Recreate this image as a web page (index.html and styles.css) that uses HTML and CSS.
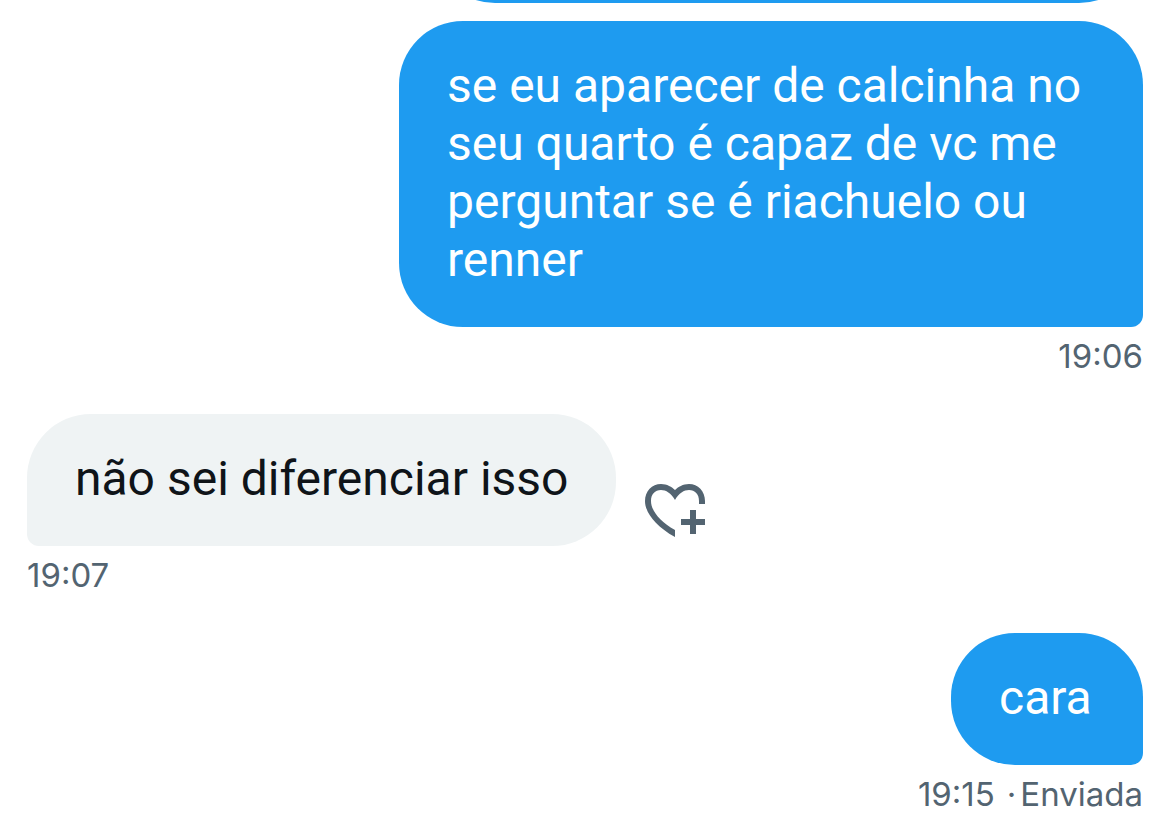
FILE: index.html
```html
<!DOCTYPE html>
<html lang="pt-BR">
<head>
<meta charset="utf-8">
<meta name="viewport" content="width=device-width, initial-scale=1">
<title>Mensagens</title>
<link rel="stylesheet" href="styles.css">
</head>
<body>
<main class="chat">
  <div class="previous"></div>
  <article class="message sent">
    <p class="bubble">se eu aparecer de calcinha no seu quarto é capaz de vc me perguntar se é riachuelo ou renner</p>
    <time class="meta">19:06</time>
  </article>
  <article class="message received">
    <div class="row">
      <p class="bubble">não sei diferenciar isso</p>
      <button class="react" type="button" aria-label="Reagir">
        <svg class="heart" viewBox="0 0 60 54" aria-hidden="true">
          <path d="M30 53C10 42 0 28 0 17C0 7 7 0 16 0C22 0 27 3 30 6C33 3 38 0 44 0C53 0 60 7 60 17V20H54V17C54 10 50 6 44 6C39 6 34 9 30 16C26 9 21 6 16 6C10 6 6 10 6 17C6 26 14 37 30 46Z"/>
          <path d="M45 26H51V35H60V41H51V50H45V41H36V35H45Z"/>
        </svg>
      </button>
    </div>
    <time class="meta">19:07</time>
  </article>
  <article class="message sent">
    <p class="bubble">cara</p>
    <div class="meta status"><time>19:15</time><span class="sent-state"><span>·</span><span>Enviada</span></span></div>
  </article>
</main>
</body>
</html>
```
FILE: styles.css
```css
* { box-sizing: border-box; }
body { margin: 0; background: #fff; font-family: Roboto, "Liberation Sans", sans-serif; }
.chat { display: flex; flex-direction: column; padding: 0 26px 0 27px; }
.previous { align-self: flex-end; width: 712px; height: 3px; margin-bottom: 18px; overflow: hidden; display: flex; align-items: flex-end; }
.previous::before { content: ""; flex: 1; height: 128px; background: #1e9bf0; border-radius: 64px; }
.message { display: flex; flex-direction: column; align-items: flex-start; margin-bottom: 37px; }
.sent { align-items: flex-end; }
.bubble { min-width: 192px; max-width: 744px; margin: 0; padding: 36px 48px 38px; font-size: 48px; line-height: 58px; border-radius: 64px; }
.sent .bubble { background: #1e9bf0; color: #fff; border-bottom-right-radius: 12px; }
.received .bubble { background: #eff3f4; color: #0f1419; border-bottom-left-radius: 12px; }
.row { display: flex; align-items: flex-end; gap: 29px; }
.react { border: 0; padding: 0 0 8px; background: none; }
.heart { display: block; width: 60px; height: 54px; fill: #536471; }
.meta { margin-top: 8px; font-family: Inter, "Liberation Sans", sans-serif; font-size: 33px; line-height: 42px; color: #536471; }
.status { display: flex; gap: 12px; }
.sent-state { display: flex; gap: 4px; }
```
